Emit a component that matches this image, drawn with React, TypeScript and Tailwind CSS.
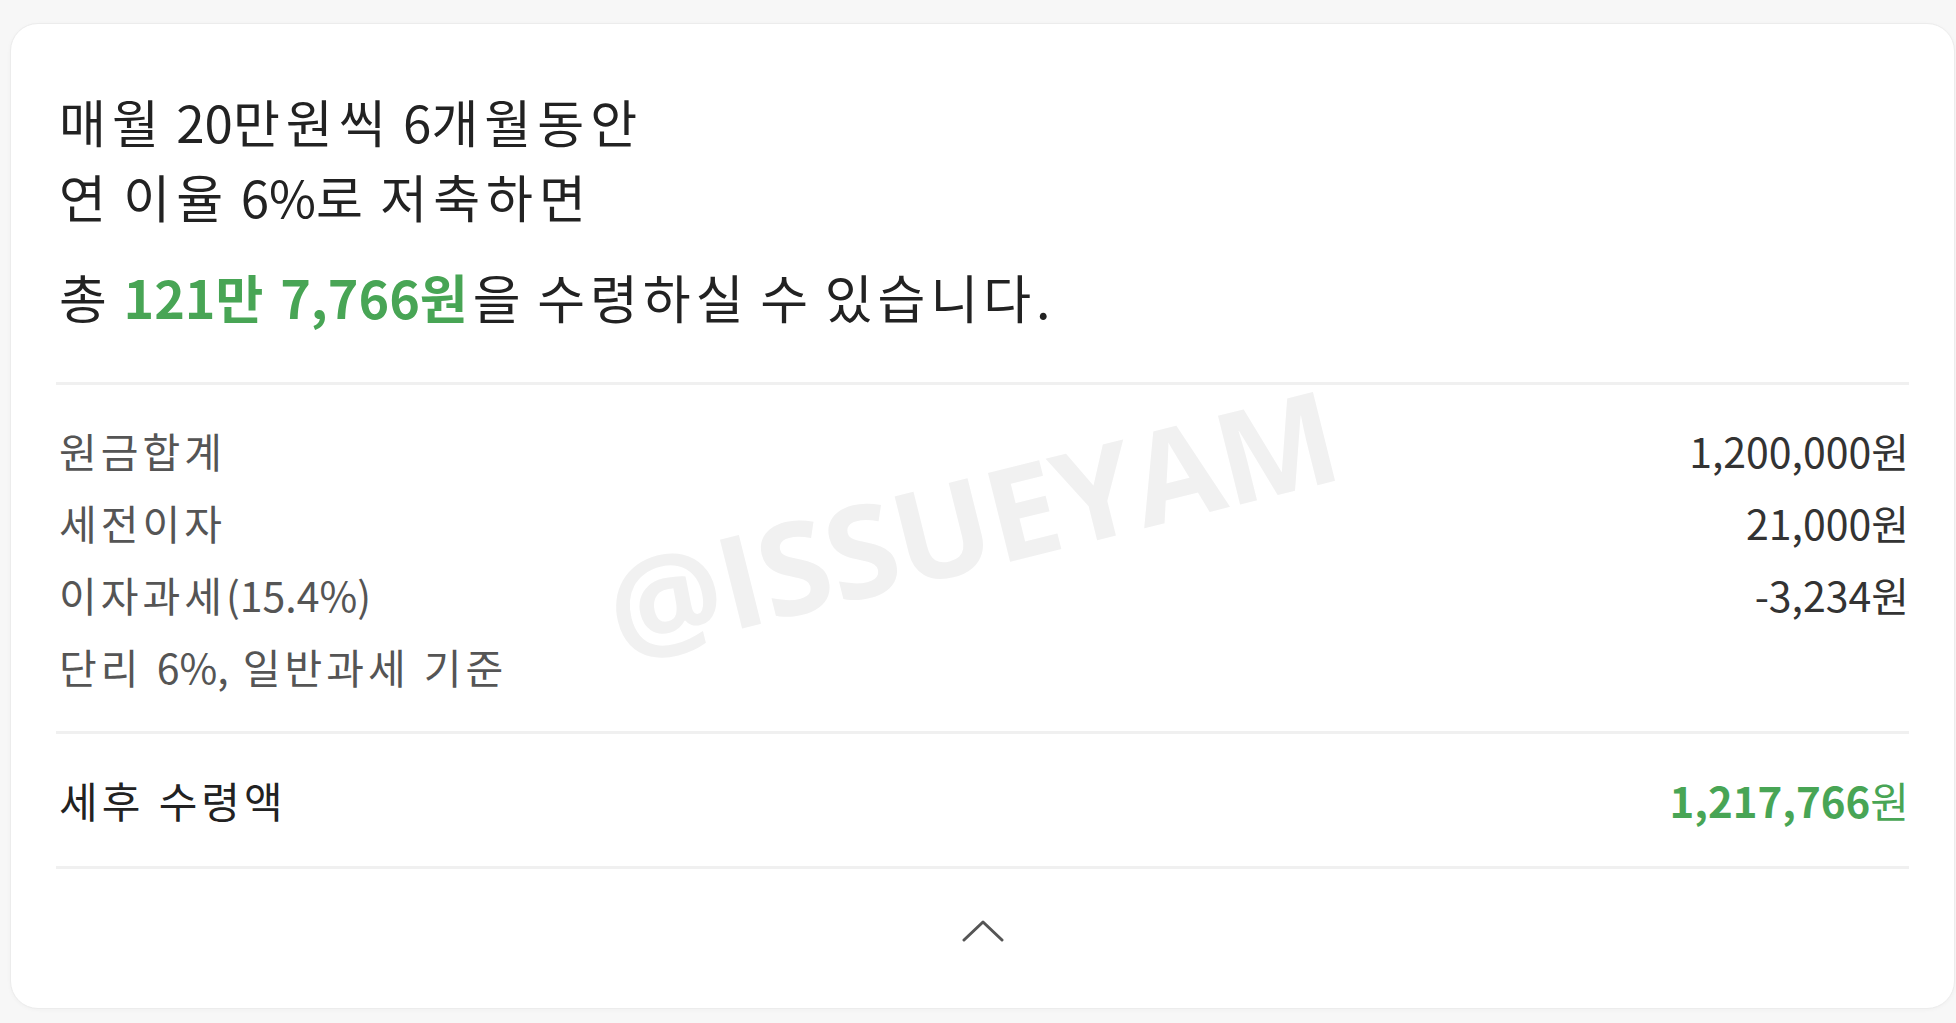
const rows = [
  { label: "원금합계", value: "1,200,000원" },
  { label: "세전이자", value: "21,000원" },
  { label: "이자과세(15.4%)", value: "-3,234원" },
  { label: "단리 6%, 일반과세 기준", value: "" },
];

// Hangul runs get extra tracking so the syllables sit as wide as in the original
function Ko({ text, className }: { text: string; className: string }) {
  return (
    <>
      {text.split(/([가-힣]+)/).map((part, i) =>
        /[가-힣]/.test(part) ? (
          <span key={i} className={className}>
            {part}
          </span>
        ) : (
          part
        )
      )}
    </>
  );
}

function Divider() {
  return <div className="h-[3px] bg-[#f0f0f0]" />;
}

export default function App() {
  return (
    <div className="min-h-screen bg-[#f7f7f7] pt-[23px] pl-[10px] pr-[1px] pb-[16px] font-['Noto_Sans_CJK_KR',sans-serif]">
      <div className="relative overflow-hidden rounded-[28px] border border-[#ececec] bg-white px-[45px] shadow-[0_1px_4px_rgba(0,0,0,0.03)]">
        {/* watermark */}
        <div className="pointer-events-none absolute left-[960px] top-[497px] select-none whitespace-nowrap font-['Open_Sans',sans-serif] text-[128px] font-bold leading-none tracking-[-1px] text-[#f1f1f1] [transform:translate(-50%,-50%)_rotate(-14deg)]">
          @ISSUEYAM
        </div>

        <div className="relative pt-[60px] pl-[3px] text-[#222]">
          <p className="text-[51px] leading-[75px]">
            <Ko text="매월 20만원씩 6개월동안" className="tracking-[6px]" />
          </p>
          <p className="text-[51px] leading-[75px]">
            <Ko text="연 이율 6%로 저축하면" className="tracking-[6px]" />
          </p>
          <p className="mt-[25px] text-[52px] leading-[75px]">
            <Ko text="총 " className="tracking-[5px]" />
            <span className="font-bold text-[#48a555]">
              <Ko text="121만 7,766원" className="tracking-[5px]" />
            </span>
            <Ko text="을 수령하실 수 있습니다." className="tracking-[5px]" />
          </p>
        </div>

        <div className="relative mt-[48px]">
          <Divider />
        </div>

        <div className="relative mt-[29px] pl-[3px]">
          {rows.map((row) => (
            <div key={row.label} className="flex items-center justify-between text-[41px] leading-[72px]">
              <span className="text-[#555] [word-spacing:5px]">
                <Ko text={row.label} className="tracking-[4px]" />
              </span>
              <span className="text-[#333]">{row.value}</span>
            </div>
          ))}
        </div>

        <div className="relative mt-[29px]">
          <Divider />
        </div>

        <div className="relative mt-[30px] flex items-center justify-between pl-[3px] text-[42px] leading-[72px]">
          <span className="text-[#222] [word-spacing:5px]">
            <Ko text="세후 수령액" className="tracking-[4px]" />
          </span>
          <span className="text-[#48a555]">
            <span className="font-bold">1,217,766</span>원
          </span>
        </div>

        <div className="relative mt-[30px]">
          <Divider />
        </div>

        <div className="flex justify-center pt-[51px] pb-[66px]">
          <svg width="42" height="22" viewBox="0 0 42 22" fill="none" stroke="#555" strokeWidth="3" strokeLinecap="round" strokeLinejoin="round">
            <polyline points="2,20 21,2 40,20" />
          </svg>
        </div>
      </div>
    </div>
  );
}
